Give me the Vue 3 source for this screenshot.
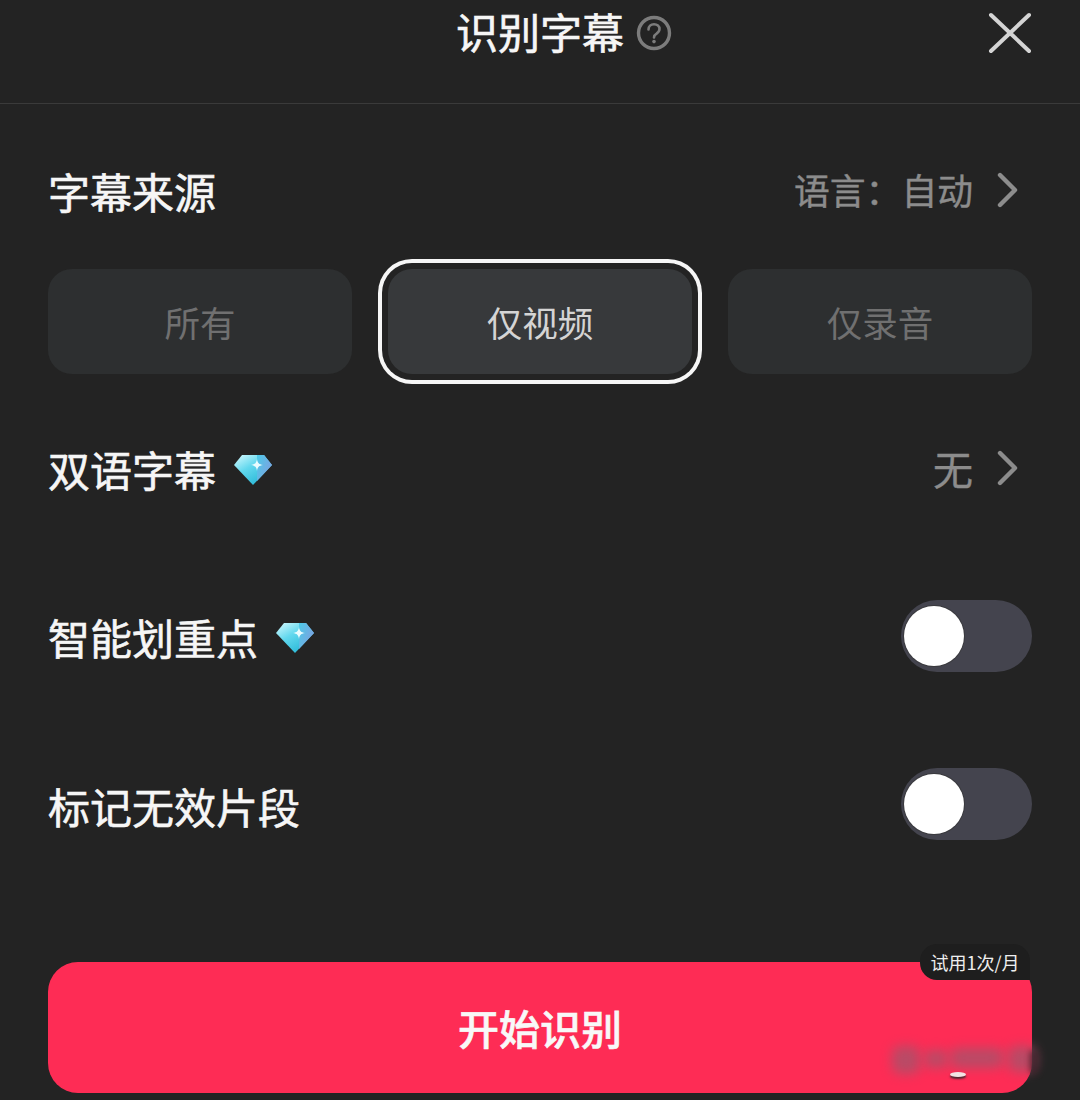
<script setup>
const sources = [
  { label: '所有', active: false },
  { label: '仅视频', active: true },
  { label: '仅录音', active: false }
]
</script>

<template>
  <div class="sheet">
    <header class="head">
      <div class="title-wrap">
        <span class="title">识别字幕</span>
        <svg class="help" viewBox="0 0 36 36" fill="none">
          <circle cx="18" cy="18" r="15.5" stroke="#7c7c7c" stroke-width="3.4" />
          <path d="M12.5 14.5c0-3.2 2.4-5.3 5.5-5.3s5.5 2 5.5 4.9c0 2.3-1.3 3.4-2.9 4.5-1.6 1-2.6 1.9-2.6 3.8" stroke="#7c7c7c" stroke-width="2.6" stroke-linecap="round" />
          <circle cx="18" cy="26.6" r="1.8" fill="#7c7c7c" />
        </svg>
      </div>
      <svg class="close" viewBox="0 0 44 42" fill="none">
        <path d="M3 3l38 36M41 3L3 39" stroke="#d4d4d4" stroke-width="4" stroke-linecap="round" />
      </svg>
    </header>

    <main class="body">
      <div class="row source-row">
        <span class="label up">字幕来源</span>
        <span class="value">
          <span class="value-text">语言：自动</span>
          <svg class="chevron" viewBox="0 0 22 36" fill="none">
            <path d="M3 3l15 15L3 33" stroke="#8c8c8c" stroke-width="4.4" stroke-linecap="round" stroke-linejoin="round" />
          </svg>
        </span>
      </div>

      <div class="options">
        <div v-for="s in sources" :key="s.label" class="option" :class="{ active: s.active }">{{ s.label }}</div>
      </div>

      <div class="row bilingual-row">
        <span class="label-wrap">
          <span class="label up">双语字幕</span>
          <svg class="gem gem-a" viewBox="0 0 40 32">
            <defs>
              <linearGradient id="gemFill" x1="0" y1="0" x2="0.75" y2="1">
                <stop offset="0" stop-color="#d9fbff" />
                <stop offset="0.45" stop-color="#62d8ee" />
                <stop offset="1" stop-color="#22b4d4" />
              </linearGradient>
              <linearGradient id="gemSide" x1="0" y1="0" x2="1" y2="0.6">
                <stop offset="0" stop-color="#4ccbe8" />
                <stop offset="1" stop-color="#7f9fe0" />
              </linearGradient>
            </defs>
            <path d="M9 1h22l8 10-19 20L1 11z" fill="url(#gemFill)" />
            <path d="M24 1h7l8 10-15 16z" fill="url(#gemSide)" />
            <path d="M24 5c.6 4 2 5.4 6 6-4 .6-5.4 2-6 6-.6-4-2-5.4-6-6 4-.6 5.4-2 6-6z" fill="#eafcff" />
          </svg>
        </span>
        <span class="value">
          <span class="value-text big">无</span>
          <svg class="chevron" viewBox="0 0 22 36" fill="none">
            <path d="M3 3l15 15L3 33" stroke="#8c8c8c" stroke-width="4.4" stroke-linecap="round" stroke-linejoin="round" />
          </svg>
        </span>
      </div>

      <div class="row highlight-row">
        <span class="label-wrap">
          <span class="label mid">智能划重点</span>
          <svg class="gem gem-b" viewBox="0 0 40 32">
            <path d="M9 1h22l8 10-19 20L1 11z" fill="url(#gemFill)" />
            <path d="M24 1h7l8 10-15 16z" fill="url(#gemSide)" />
            <path d="M24 5c.6 4 2 5.4 6 6-4 .6-5.4 2-6 6-.6-4-2-5.4-6-6 4-.6 5.4-2 6-6z" fill="#eafcff" />
          </svg>
        </span>
        <span class="toggle"><span class="knob"></span></span>
      </div>

      <div class="row invalid-row">
        <span class="label low">标记无效片段</span>
        <span class="toggle"><span class="knob"></span></span>
      </div>

      <div class="start">
        <span class="start-text">开始识别</span>
        <span class="badge">试用1次/月</span>
        <!-- smudged-out watermark -->
        <span class="smudge s1"></span>
        <span class="smudge s2"></span>
        <span class="smudge s3"></span>
        <span class="smudge s4"></span>
        <span class="smudge s5"></span>
        <span class="glint"></span>
      </div>
    </main>
  </div>
</template>

<style>
body { background: #232323; }
</style>

<style scoped>
.sheet { width: 1080px; height: 1100px; overflow: hidden; background: #232323; color: #f6f6f6; font-family: "Noto Sans CJK SC", "Noto Sans", sans-serif; }

.head { height: 103px; border-bottom: 1px solid #3a3a3a; display: flex; align-items: flex-start; justify-content: center; position: relative; }
.title-wrap { height: 66px; position: relative; }
.title { font-size: 42px; font-weight: 400; -webkit-text-stroke: 0.6px #f6f6f6; line-height: 66px; display: block; margin-top: -2px; }
.help { position: absolute; left: 180px; top: 15px; width: 36px; height: 36px; }
.close { position: absolute; left: 988px; top: 12px; width: 44px; height: 42px; }

.body { padding: 0 48px; }
.row { height: 72px; display: flex; align-items: center; justify-content: space-between; }
.source-row { margin-top: 53px; }
.bilingual-row { margin-top: 61px; }
.highlight-row { margin-top: 93px; }
.invalid-row { margin-top: 96px; }

.label-wrap { display: flex; align-items: center; gap: 17px; }
.label { font-size: 42px; font-weight: 400; -webkit-text-stroke: 0.6px #f6f6f6; line-height: 72px; }
.label.up { padding-bottom: 4px; }
.label.mid { padding-top: 2px; }
.label.low { padding-top: 4px; }
.gem { width: 40px; height: 32px; }
.gem-a { margin-top: -2px; }
.gem-b { margin-top: 3px; }
.value { display: flex; align-items: center; gap: 24px; }
.value-text { font-size: 35.8px; color: #8c8c8c; -webkit-text-stroke: 0.4px #8c8c8c; line-height: 72px; padding-bottom: 8px; }
.value-text.big { font-size: 40px; padding-bottom: 6px; }
.chevron { width: 22px; height: 36px; margin-right: 13px; margin-top: -6px; }

.options { margin-top: 40px; display: grid; grid-template-columns: repeat(3, 304px); gap: 36px; }
.option { height: 105px; border-radius: 24px; background: #2d2f30; color: #707070; font-size: 35.5px; display: flex; align-items: center; justify-content: center; }
.option.active { background: #37393b; color: #d4d4d4; box-shadow: 0 0 0 6px #232323, 0 0 0 10px #f6f6f6; }

.toggle { width: 131px; height: 72px; border-radius: 36px; background: #44444e; display: block; position: relative; }
.knob { position: absolute; left: 3px; top: 6px; width: 60px; height: 60px; border-radius: 50%; background: #fff; box-shadow: 0 0 0 1px #3a3a3e; }

.start { margin-top: 122px; height: 131px; border-radius: 30px; background: #fe2c55; display: flex; align-items: center; justify-content: center; position: relative; }
.start-text { font-size: 41px; font-weight: 500; -webkit-text-stroke: 0.6px #f8f8f8; color: #f8f8f8; padding-bottom: 2px; }
.badge { position: absolute; right: 2px; top: -18px; width: 110px; height: 36px; border-radius: 17px 17px 0 17px; background: #1e1e1e; color: #eee; font-size: 18px; display: flex; align-items: center; justify-content: center; }

.smudge { position: absolute; background: #a8526a; filter: blur(6px); opacity: 0.8; border-radius: 8px; }
.s1 { left: 844px; top: 84px; width: 28px; height: 28px; }
.s2 { left: 876px; top: 88px; width: 24px; height: 18px; }
.s3 { left: 902px; top: 86px; width: 54px; height: 20px; }
.s4 { left: 960px; top: 84px; width: 28px; height: 26px; }
.s5 { left: 982px; top: 88px; width: 8px; height: 24px; background: #3a2028; filter: blur(3px); }
.glint { position: absolute; left: 902px; top: 110px; width: 16px; height: 5px; border-radius: 50%; background: #f2e4e4; box-shadow: 0 2px 2px #4a2a30; }
</style>
